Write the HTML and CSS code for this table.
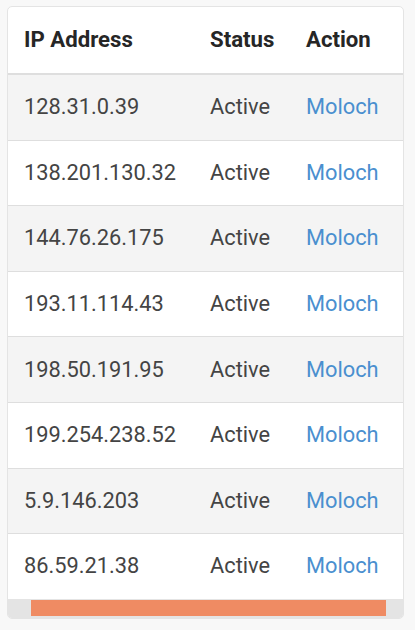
FILE: index.html
```html
<!DOCTYPE html>
<html>
<head>
<meta charset="utf-8">
<link rel="stylesheet" href="styles.css">
</head>
<body>
<div class="card">
  <table class="ip-table">
    <thead>
      <tr><th class="col-ip">IP Address</th><th class="col-status">Status</th><th class="col-action">Action</th></tr>
    </thead>
    <tbody>
      <tr><td>128.31.0.39</td><td>Active</td><td><a class="link">Moloch</a></td></tr>
      <tr><td>138.201.130.32</td><td>Active</td><td><a class="link">Moloch</a></td></tr>
      <tr><td>144.76.26.175</td><td>Active</td><td><a class="link">Moloch</a></td></tr>
      <tr><td>193.11.114.43</td><td>Active</td><td><a class="link">Moloch</a></td></tr>
      <tr><td>198.50.191.95</td><td>Active</td><td><a class="link">Moloch</a></td></tr>
      <tr><td>199.254.238.52</td><td>Active</td><td><a class="link">Moloch</a></td></tr>
      <tr><td>5.9.146.203</td><td>Active</td><td><a class="link">Moloch</a></td></tr>
      <tr><td>86.59.21.38</td><td>Active</td><td><a class="link">Moloch</a></td></tr>
    </tbody>
  </table>
  <div class="scroll-track"><div class="scroll-thumb"></div></div>
</div>
</body>
</html>
```
FILE: styles.css
```css
html, body {
  margin: 0;
  padding: 0;
  background: #f8f8f8;
}
body {
  font-family: Roboto, "Liberation Sans", sans-serif;
  font-size: 21.8px;
  color: #444;
}
.card {
  margin: 6px 0 0 7px;
  width: 395px;
  background: #fff;
  border: 1px solid #e4e4e4;
  border-radius: 5px;
  overflow: hidden;
}
.ip-table {
  width: 100%;
  border-collapse: collapse;
  table-layout: fixed;
}
.col-ip { width: 154px; }
.col-status { width: 64px; }
.ip-table th {
  text-align: left;
  font-weight: 700;
  font-size: 22.2px;
  color: #262626;
  padding: 16px 16px 18px;
  line-height: 32px;
  border-bottom: 2px solid #dedede;
}
.ip-table td {
  padding: 16.3px 16px 16.3px;
  line-height: 32px;
  border-top: 1px solid #dedede;
  white-space: nowrap;
}
.ip-table tbody tr:nth-child(odd) {
  background: #f4f4f4;
}
.link {
  color: #4a8fcf;
  text-decoration: none;
}
.scroll-track {
  height: 19px;
  background: #e4e4e4;
  padding: 1px 0 0 23px;
  box-sizing: border-box;
}
.scroll-thumb {
  width: 355px;
  height: 16px;
  background: #ef8b63;
}
```
